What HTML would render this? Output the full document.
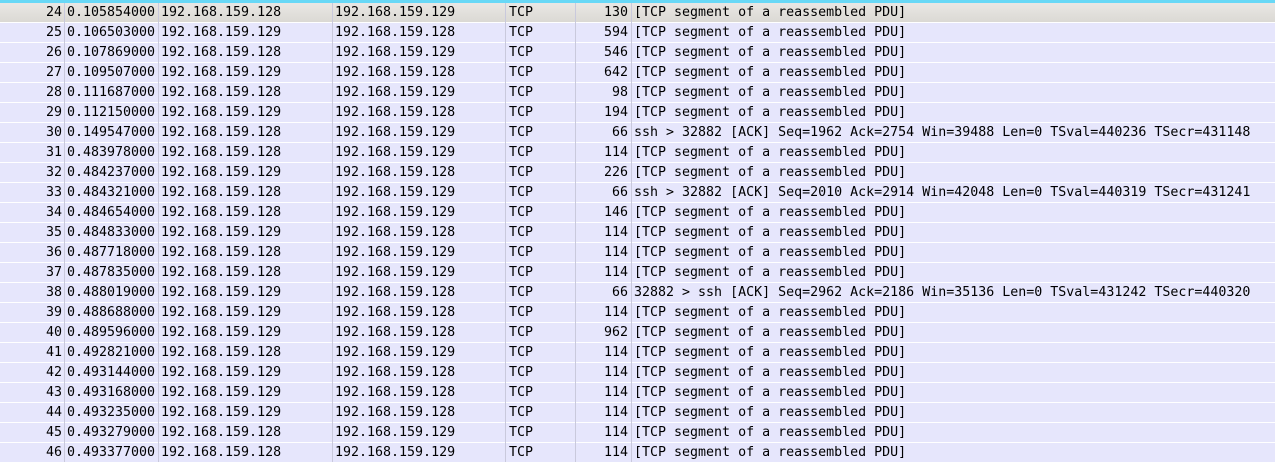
<!DOCTYPE html><html><head><style>
body{margin:0;width:1275px;height:465px;background:#fff;overflow:hidden;font-family:"DejaVu Sans Mono","Liberation Mono",monospace;font-size:13.3px;}
.top{height:3px;background:#68d8f6;}
.r{position:relative;height:19px;border-bottom:1px solid #fff;background:#e6e6fc;line-height:19px;white-space:pre;}
.r.s{background:linear-gradient(#e9e7e4,#dbd9d4);border-bottom:1px solid #fff;}
.r span{position:absolute;top:0;height:19px;}
.v{position:absolute;top:3px;width:1px;height:459px;background:#c9c9dc;}
</style></head><body><div class="top"></div>
<div id="t"></div>
<div class="v" style="left:64px"></div><div class="v" style="left:158px"></div><div class="v" style="left:332px"></div><div class="v" style="left:505px"></div><div class="v" style="left:575px"></div><div class="v" style="left:631px"></div>
<script>
var d=[
[24,"0.105854000","192.168.159.128","192.168.159.129",130,"[TCP segment of a reassembled PDU]"],
[25,"0.106503000","192.168.159.129","192.168.159.128",594,"[TCP segment of a reassembled PDU]"],
[26,"0.107869000","192.168.159.128","192.168.159.129",546,"[TCP segment of a reassembled PDU]"],
[27,"0.109507000","192.168.159.129","192.168.159.128",642,"[TCP segment of a reassembled PDU]"],
[28,"0.111687000","192.168.159.128","192.168.159.129",98,"[TCP segment of a reassembled PDU]"],
[29,"0.112150000","192.168.159.129","192.168.159.128",194,"[TCP segment of a reassembled PDU]"],
[30,"0.149547000","192.168.159.128","192.168.159.129",66,"ssh > 32882 [ACK] Seq=1962 Ack=2754 Win=39488 Len=0 TSval=440236 TSecr=431148"],
[31,"0.483978000","192.168.159.128","192.168.159.129",114,"[TCP segment of a reassembled PDU]"],
[32,"0.484237000","192.168.159.129","192.168.159.128",226,"[TCP segment of a reassembled PDU]"],
[33,"0.484321000","192.168.159.128","192.168.159.129",66,"ssh > 32882 [ACK] Seq=2010 Ack=2914 Win=42048 Len=0 TSval=440319 TSecr=431241"],
[34,"0.484654000","192.168.159.128","192.168.159.129",146,"[TCP segment of a reassembled PDU]"],
[35,"0.484833000","192.168.159.129","192.168.159.128",114,"[TCP segment of a reassembled PDU]"],
[36,"0.487718000","192.168.159.128","192.168.159.129",114,"[TCP segment of a reassembled PDU]"],
[37,"0.487835000","192.168.159.128","192.168.159.129",114,"[TCP segment of a reassembled PDU]"],
[38,"0.488019000","192.168.159.129","192.168.159.128",66,"32882 > ssh [ACK] Seq=2962 Ack=2186 Win=35136 Len=0 TSval=431242 TSecr=440320"],
[39,"0.488688000","192.168.159.129","192.168.159.128",114,"[TCP segment of a reassembled PDU]"],
[40,"0.489596000","192.168.159.129","192.168.159.128",962,"[TCP segment of a reassembled PDU]"],
[41,"0.492821000","192.168.159.128","192.168.159.129",114,"[TCP segment of a reassembled PDU]"],
[42,"0.493144000","192.168.159.129","192.168.159.128",114,"[TCP segment of a reassembled PDU]"],
[43,"0.493168000","192.168.159.129","192.168.159.128",114,"[TCP segment of a reassembled PDU]"],
[44,"0.493235000","192.168.159.129","192.168.159.128",114,"[TCP segment of a reassembled PDU]"],
[45,"0.493279000","192.168.159.128","192.168.159.129",114,"[TCP segment of a reassembled PDU]"],
[46,"0.493377000","192.168.159.128","192.168.159.129",114,"[TCP segment of a reassembled PDU]"]];
var h="";d.forEach(function(r,i){h+='<div class="r'+(i==0?' s':'')+'"><span style="right:1213px">'+r[0]+'</span><span style="left:67px">'+r[1]+'</span><span style="left:161px">'+r[2]+'</span><span style="left:335px">'+r[3]+'</span><span style="left:509px">TCP</span><span style="right:647px">'+r[4]+'</span><span style="left:634px">'+r[5]+'</span></div>';});
document.getElementById("t").innerHTML=h;
</script></body></html>
